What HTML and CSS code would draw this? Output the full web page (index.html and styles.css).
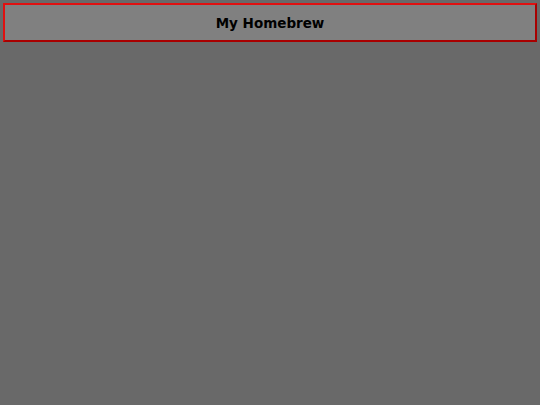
FILE: index.html
```html
<!DOCTYPE html>
<html>
<head>
<meta charset="utf-8">
<link rel="stylesheet" href="styles.css">
</head>
<body>
<header class="title-bar">
  <h1 class="title">My Homebrew</h1>
</header>
</body>
</html>
```

FILE: styles.css
```css
html, body {
  margin: 0;
  padding: 0;
  height: 100%;
}
body {
  background: #696969;
  font-family: "DejaVu Sans", Verdana, sans-serif;
  padding: 3px;
  box-sizing: border-box;
}
.title-bar {
  height: 35px;
  background: #808080;
  border: 2px solid;
  border-color: #e01010 #a80000 #a80000 #e01010;
  display: flex;
  align-items: center;
  justify-content: center;
}
.title {
  margin: 0;
  font-size: 13.5px;
  font-weight: bold;
  color: #000;
}
```
